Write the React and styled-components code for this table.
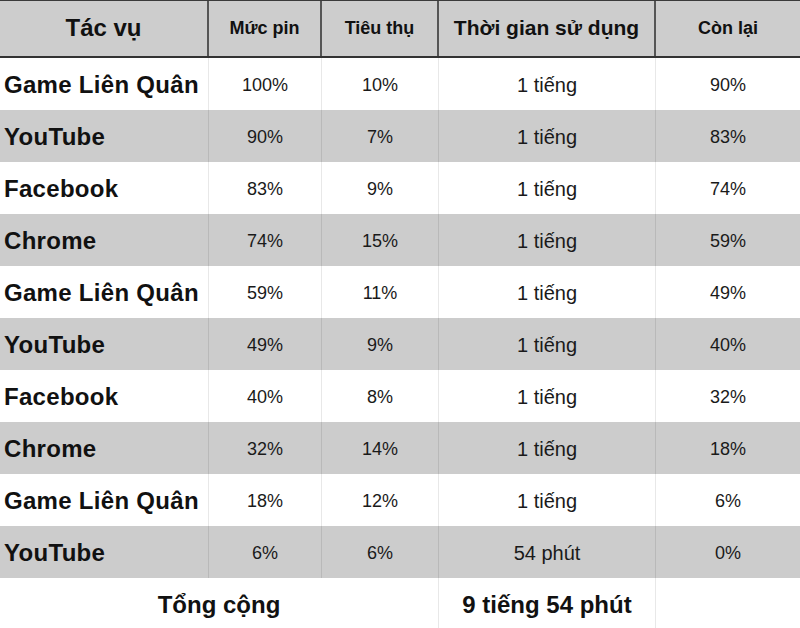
import styled, { createGlobalStyle } from "styled-components";

const GlobalStyle = createGlobalStyle`
  html, body {
    margin: 0;
    padding: 0;
    background: #ffffff;
  }

  body {
    font-family: "Liberation Sans", Arial, sans-serif;
    color: #111111;
  }
`;

const COLUMNS = "209px 113px 117px 217px 144px";

const Table = styled.div`
  width: 800px;
  height: 628px;
  overflow: hidden;
`;

const HeaderRow = styled.div`
  display: grid;
  grid-template-columns: ${COLUMNS};
  height: 58px;
  box-sizing: border-box;
  background: #cdcdcd;
  border-top: 1px solid #3a3a3a;
  border-bottom: 2px solid #333333;
`;

const HeadCell = styled.div`
  display: flex;
  align-items: center;
  justify-content: center;
  font-weight: bold;
  font-size: ${(p) => p.size}px;
  color: #111111;
  border-right: 2px solid #555555;
  padding-bottom: 1px;

  &:last-child {
    border-right: none;
  }
`;

const Row = styled.div`
  display: grid;
  grid-template-columns: ${COLUMNS};
  height: 52px;
  background: ${(p) => (p.striped ? "#cccccc" : "#ffffff")};
`;

const Cell = styled.div`
  display: flex;
  align-items: center;
  justify-content: center;
  font-size: ${(p) => p.size || 18}px;
  color: #1a1a1a;
  border-right: 1px solid rgba(0, 0, 0, 0.09);
  padding-top: 2px;

  &:last-child {
    border-right: none;
  }
`;

const NameCell = styled(Cell)`
  justify-content: flex-start;
  padding-left: 4px;
  font-size: 24px;
  font-weight: bold;
  letter-spacing: 0.3px;
  color: #111111;
`;

const FooterRow = styled.div`
  display: grid;
  grid-template-columns: 439px 217px 144px;
  height: 50px;
  background: #ffffff;
`;

const TotalCell = styled(Cell)`
  font-size: 24px;
  font-weight: bold;
  color: #111111;
  padding-top: 4px;
`;

const rows = [
  ["Game Liên Quân", "100%", "10%", "1 tiếng", "90%"],
  ["YouTube", "90%", "7%", "1 tiếng", "83%"],
  ["Facebook", "83%", "9%", "1 tiếng", "74%"],
  ["Chrome", "74%", "15%", "1 tiếng", "59%"],
  ["Game Liên Quân", "59%", "11%", "1 tiếng", "49%"],
  ["YouTube", "49%", "9%", "1 tiếng", "40%"],
  ["Facebook", "40%", "8%", "1 tiếng", "32%"],
  ["Chrome", "32%", "14%", "1 tiếng", "18%"],
  ["Game Liên Quân", "18%", "12%", "1 tiếng", "6%"],
  ["YouTube", "6%", "6%", "54 phút", "0%"],
];

const App = () => {
  return (
    <>
      <GlobalStyle />
      <Table>
        <HeaderRow>
          <HeadCell size={24}>Tác vụ</HeadCell>
          <HeadCell size={18}>Mức pin</HeadCell>
          <HeadCell size={18}>Tiêu thụ</HeadCell>
          <HeadCell size={21}>Thời gian sử dụng</HeadCell>
          <HeadCell size={18}>Còn lại</HeadCell>
        </HeaderRow>

        {rows.map(([name, level, used, time, left], i) => (
          <Row key={i} striped={i % 2 === 1}>
            <NameCell>{name}</NameCell>
            <Cell>{level}</Cell>
            <Cell>{used}</Cell>
            <Cell size={20}>{time}</Cell>
            <Cell>{left}</Cell>
          </Row>
        ))}

        <FooterRow>
          <TotalCell>Tổng cộng</TotalCell>
          <TotalCell>9 tiếng 54 phút</TotalCell>
          <TotalCell />
        </FooterRow>
      </Table>
    </>
  );
};

export default App;
